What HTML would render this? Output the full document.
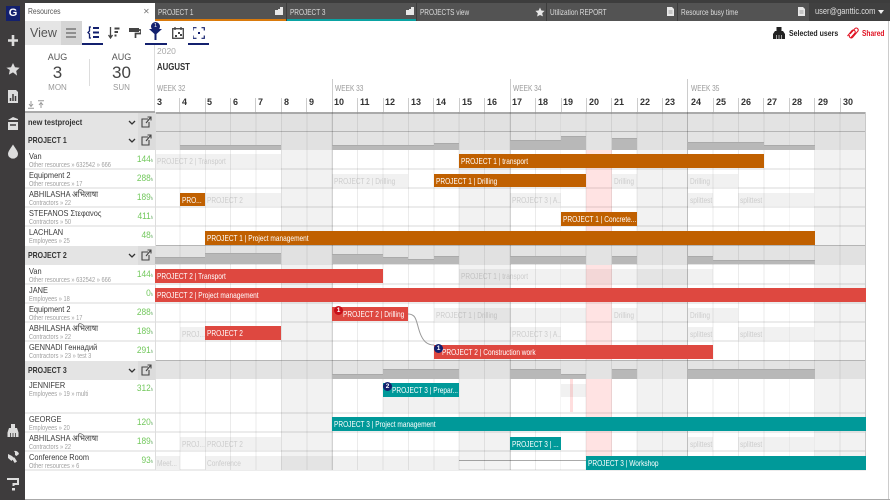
<!DOCTYPE html>
<html><head><meta charset="utf-8"><title>Resources</title>
<style>
html,body{margin:0;padding:0}
body{width:890px;height:500px;overflow:hidden;background:#fff;position:relative;font-family:"Liberation Sans","Noto Sans CJK SC",sans-serif;color:#333}
div,span,svg{position:absolute;box-sizing:border-box}
.t{white-space:nowrap;line-height:1}
.tab{top:3px;height:18px;background:#535353;color:#ddd;font-size:8.5px;line-height:18px;white-space:nowrap}
.tab span{left:3px;top:0;transform:scaleX(.76);transform-origin:0 0}
.n{left:29px;font-size:8.5px;color:#3a3a3a;white-space:nowrap;line-height:10px;transform:scaleX(.87);transform-origin:0 0}
.s{left:29px;font-size:7.3px;color:#a0a0a0;white-space:nowrap;line-height:9px;transform:scaleX(.78);transform-origin:0 0}
.h{left:120px;width:33px;text-align:right;font-size:9.5px;color:#72c85c;white-space:nowrap;line-height:10px;transform:scaleX(.88);transform-origin:100% 0}
.h i{font-style:normal;font-size:4.5px;color:#6a6}
.grp{left:25px;width:130px;height:19px;background:#e4e4e4;font-weight:bold;font-size:8.5px;color:#333;line-height:18px}
.grp span{left:3px;top:0;transform:scaleX(.82);transform-origin:0 0;white-space:nowrap}
.ic{left:113px;top:0;width:17px;height:19px;background:#dcdcdc}
.rl{left:25px;width:841px;height:1.5px;background:#ececec}
.gr{left:155px;width:711px;background:#e3e3e3;border-top:1px solid #b5b5b5}
.we{width:50.8px;top:112px;height:358px;background:rgba(0,0,0,.05)}
.wg{width:50.8px;background:rgba(0,0,0,.008)}
.l{background:#b8b8b8;border-top:1px solid #aaa}
.g{background:#f1f1f1;color:#ccc;font-size:8.5px;line-height:14px;white-space:nowrap;overflow:hidden}
.b{color:#fff;font-size:8.5px;line-height:14px;white-space:nowrap;overflow:hidden}
.b span,.g span{left:2px;top:0;transform:scaleX(.77);transform-origin:0 0}
.o{background:#c06000}.r{background:#de4840}.c{background:#009999}
.d{top:97px;font-size:9px;font-weight:bold;color:#333;line-height:10px}
.w{top:84px;font-size:8px;color:#999;line-height:9px;white-space:nowrap;transform:scaleX(.82);transform-origin:0 0}
.v{top:98px;width:1px;height:14px;background:#ccc}
.vw{top:79px;width:1px;height:33px;background:#ccc}
.bd{width:9px;height:9px;border-radius:50%;color:#fff;font-size:6.5px;line-height:9px;text-align:center;font-weight:bold}
</style></head><body>

<!-- sidebar & top -->
<div style="left:0;top:0;width:890px;height:21px;background:#3d3d3d"></div>
<div style="left:0;top:0;width:25px;height:500px;background:#3e3c3d"></div>
<div style="left:6px;top:6px;width:14px;height:15px;background:#13206e;color:#fff;font-weight:bold;font-size:11px;line-height:15px;text-align:center">G</div>
<svg style="left:7px;top:34px" width="12" height="13"><path d="M6 1V12M1 6.500H11" stroke="#ddd" stroke-width="2.600"/></svg>
<svg style="left:6px;top:62px" width="14" height="14"><path d="M7 1l2 4.200 4.600.6-3.400 3.200.9 4.600L7 10.400 2.900 12.600l.9-4.600L.4 5.800 5 5.200z" fill="#ddd"/></svg>
<svg style="left:7px;top:90px" width="12" height="13"><path d="M1 0h8l2 2v11H1z" fill="#ddd"/><path d="M3.500 11V8M6 11V4M8.500 11V6" stroke="#3e3c3d" stroke-width="1.500"/></svg>
<svg style="left:7px;top:117px" width="12" height="14"><path d="M6 0l5 2v1H1V3zM1 5h10v8H1z" fill="#ddd"/><path d="M3 8h6" stroke="#3e3c3d" stroke-width="1.500"/></svg>
<svg style="left:7px;top:144px" width="12" height="15"><path d="M6 .5C8 4 11 7 11 10a5 4.600 0 0 1-10 0C1 7 4 4 6 .5z" fill="#ddd"/></svg>
<svg style="left:7px;top:424px" width="12" height="14"><path d="M4 0h4v4h2l1.500 4.500V13H.5V8.500L2 4h2z" fill="#ddd"/><path d="M3.500 9v4M6 9v4M8.500 9v4" stroke="#3e3c3d" stroke-width=".8"/></svg>
<svg style="left:6px;top:450px" width="14" height="14"><path d="M8 1a4 4 0 0 1 5 3L10.500 6 9 5 9 2.500zM8.500 7.500l2.500 4-2.300 1.500-3-4.600 1-1z" fill="#ddd"/><path d="M2 4l4 2 2 2-2.500 3L2 8z" fill="#ddd"/></svg>
<svg style="left:7px;top:478px" width="12" height="13"><path d="M1 2V1h10v5H6.500v2" fill="none" stroke="#ddd" stroke-width="2"/><rect x="5" y="10" width="3" height="2.500" fill="#ddd"/></svg>

<!-- tabs -->
<div style="left:25px;top:3px;width:130px;height:18px;background:#fff"></div>
<div class="t" style="left:28px;top:8px;font-size:8px;color:#555;transform:scaleX(.85);transform-origin:0 0">Resources</div>
<div class="t" style="left:143px;top:8px;font-size:8px;color:#777">✕</div>
<div class="tab" style="left:155px;width:131px"><span>PROJECT 1</span><div style="left:0;top:16px;width:131px;height:2px;background:#d97a0c"></div></div>
<div class="tab" style="left:287px;width:129px;"><span>PROJECT 3</span><div style="left:0;top:16px;width:129px;height:2px;background:#0aa3a3"></div></div>
<div class="tab" style="left:417px;width:129px"><span>PROJECTS view</span></div>
<div class="tab" style="left:547px;width:130px"><span>Utilization REPORT</span></div>
<div class="tab" style="left:678px;width:131px"><span>Resource busy time</span></div>
<div style="left:809px;top:3px;width:81px;height:18px;background:#404040"></div>
<div class="t" style="left:815px;top:7px;font-size:9px;color:#ddd;transform:scaleX(.83);transform-origin:0 0">user@ganttic.com</div>
<div style="left:878px;top:10px;width:0;height:0;border:3.500px solid transparent;border-top:4.500px solid #eee;border-bottom:0"></div>
<svg style="left:275px;top:7px" width="9" height="8"><path d="M0 3h3V2h2V0h3v8H0z" fill="#e8e8e8"/></svg>
<svg style="left:406px;top:7px" width="9" height="8"><path d="M0 3h3V2h2V0h3v8H0z" fill="#e8e8e8"/></svg>
<svg style="left:535px;top:7px" width="10" height="10"><path d="M5 .5l1.400 3 3.200.4-2.400 2.200.7 3.300L5 8 2.100 9.500l.7-3.300L.4 3.900l3.200-.4z" fill="#e8e8e8"/></svg>
<svg style="left:667px;top:7px" width="7" height="9"><path d="M0 0h5l2 2v7H0z" fill="#e8e8e8"/><path d="M1.500 4h4M1.500 6h4" stroke="#888" stroke-width=".7"/></svg>
<svg style="left:798px;top:7px" width="7" height="9"><path d="M0 0h5l2 2v7H0z" fill="#e8e8e8"/><path d="M1.500 4h4M1.500 6h4" stroke="#888" stroke-width=".7"/></svg>

<!-- toolbar -->
<div style="left:25px;top:21px;width:36px;height:24px;background:#e5e5e5"></div>
<div style="left:61px;top:21px;width:21px;height:24px;background:#d5d5d5"></div>
<div class="t" style="left:30px;top:27px;font-size:12.500px;color:#555">View</div>
<svg style="left:66px;top:28px" width="11" height="10"><path d="M0 1h10M0 5h10M0 9h10" stroke="#666" stroke-width="1.200"/></svg>
<svg style="left:87px;top:26px" width="13" height="13"><path d="M4 1H2.500v4L1 6.500 2.500 8v4H4" fill="none" stroke="#13206e" stroke-width="1.300"/><path d="M6 2h6M6 6.500h6M6 11h6" stroke="#13206e" stroke-width="2"/></svg>
<div style="left:82px;top:43px;width:21px;height:1.500px;background:#13206e"></div>
<svg style="left:108px;top:27px" width="12" height="12"><path d="M2.500 0v11M0.500 8l2 3 2-3" fill="none" stroke="#444" stroke-width="1.300"/><path d="M6.500 1.500h5M6.500 5h3.500M6.500 8.500h2" stroke="#444" stroke-width="2"/></svg>
<svg style="left:129px;top:27px" width="12" height="12"><path d="M0 1h10v4H0z" fill="#444"/><path d="M10 3h2v3.500H6.500V11" fill="none" stroke="#444" stroke-width="1.700"/></svg>
<svg style="left:149px;top:23px" width="13" height="18"><path d="M0 6h13L7.500 11v6h-2v-6z" fill="#13206e"/></svg>
<div class="bd" style="left:151px;top:22px;background:#13206e;font-size:5.500px;font-weight:normal">1</div>
<div style="left:145px;top:43px;width:22px;height:1.500px;background:#13206e"></div>
<svg style="left:172px;top:27px" width="12" height="12"><rect x=".7" y="1.700" width="10.600" height="9.600" fill="none" stroke="#444" stroke-width="1.300"/><path d="M3 0v3M9 0v3" stroke="#444" stroke-width="1.300"/><path d="M6 5h2v2H6zM3 8h2v2H3zM8 7h2v2H8z" fill="#444"/></svg>
<svg style="left:193px;top:27px" width="12" height="12"><path d="M0 3.500V.7h3.500M8.500.7H11.300v2.800M0 8.500v2.800h3.500M8.500 11.300h2.800V8.500" fill="none" stroke="#13206e" stroke-width="1.200"/><rect x="5" y="5" width="2" height="2" fill="#13206e"/></svg>
<div style="left:188px;top:43px;width:21px;height:1.500px;background:#13206e"></div>

<svg style="left:773px;top:26px" width="12" height="13"><path d="M3.500 1h5v4h1.500l2 3v5H0V8l2-3h1.500z" fill="#222"/><path d="M3.500 9v4M6 9v4M8.500 9v4" stroke="#fff" stroke-width=".6"/></svg>
<div class="t" style="left:789px;top:29px;font-size:8.500px;font-weight:bold;color:#222;transform:scaleX(.82);transform-origin:0 0">Selected users</div>
<svg style="left:845px;top:25px" width="15" height="15"><path d="M5 9l5-5.500a2 2 0 0 1 3 2.500l-5.500 6.500a2 2 0 0 1-3-2.500M2.500 11L7 5.500a2 2 0 0 1 3 2.500L6 12.500" fill="none" stroke="#e01020" stroke-width="1"/></svg>
<div class="t" style="left:862px;top:29px;font-size:8.500px;font-weight:bold;color:#e01020;transform:scaleX(.78);transform-origin:0 0">Shared</div>

<!-- date head -->
<div class="t" style="left:25px;top:53px;width:65px;text-align:center;font-size:9px;color:#555">AUG</div>
<div class="t" style="left:25px;top:64px;width:65px;text-align:center;font-size:17px;color:#444">3</div>
<div class="t" style="left:25px;top:84px;width:65px;text-align:center;font-size:8px;color:#999">MON</div>
<div style="left:89px;top:59px;width:1px;height:27px;background:#ddd"></div>
<div class="t" style="left:90px;top:53px;width:63px;text-align:center;font-size:9px;color:#555">AUG</div>
<div class="t" style="left:90px;top:64px;width:63px;text-align:center;font-size:17px;color:#444">30</div>
<div class="t" style="left:90px;top:84px;width:63px;text-align:center;font-size:8px;color:#999">SUN</div>
<svg style="left:27px;top:100px" width="20" height="9"><path d="M1 .7h6M4 8V2.500M2 5l2-2.500L6 5" fill="none" stroke="#999" stroke-width="1" transform="rotate(180 4 4.500)"/><path d="M11 .7h6M14 8V2.500M12 5l2-2.500L16 5" fill="none" stroke="#999" stroke-width="1"/></svg>
<div style="left:154px;top:45px;width:1px;height:67px;background:#ddd"></div>
<div class="t" style="left:157px;top:47px;font-size:8.500px;color:#aaa">2020</div>
<div class="t" style="left:157px;top:63px;font-size:10px;font-weight:bold;color:#333;transform:scaleX(.78);transform-origin:0 0">AUGUST</div>
<div class="w" style="left:157px">WEEK 32</div>
<div class="w" style="left:335px">WEEK 33</div>
<div class="w" style="left:513px">WEEK 34</div>
<div class="w" style="left:691px">WEEK 35</div>
<div class="vw" style="left:332px"></div><div class="vw" style="left:510px"></div><div class="vw" style="left:687px"></div>
<div class="d" style="left:157px">3</div><div class="d" style="left:182px">4</div><div class="d" style="left:207px">5</div><div class="d" style="left:233px">6</div><div class="d" style="left:258px">7</div><div class="d" style="left:284px">8</div><div class="d" style="left:309px">9</div><div class="d" style="left:334px">10</div><div class="d" style="left:360px">11</div><div class="d" style="left:385px">12</div><div class="d" style="left:411px">13</div><div class="d" style="left:436px">14</div><div class="d" style="left:462px">15</div><div class="d" style="left:487px">16</div><div class="d" style="left:512px">17</div><div class="d" style="left:538px">18</div><div class="d" style="left:563px">19</div><div class="d" style="left:589px">20</div><div class="d" style="left:614px">21</div><div class="d" style="left:640px">22</div><div class="d" style="left:665px">23</div><div class="d" style="left:691px">24</div><div class="d" style="left:716px">25</div><div class="d" style="left:741px">26</div><div class="d" style="left:767px">27</div><div class="d" style="left:792px">28</div><div class="d" style="left:818px">29</div><div class="d" style="left:843px">30</div>
<div class="v" style="left:179px"></div><div class="v" style="left:205px"></div><div class="v" style="left:230px"></div><div class="v" style="left:255px"></div><div class="v" style="left:281px"></div><div class="v" style="left:306px"></div><div class="v" style="left:357px"></div><div class="v" style="left:383px"></div><div class="v" style="left:408px"></div><div class="v" style="left:433px"></div><div class="v" style="left:459px"></div><div class="v" style="left:484px"></div><div class="v" style="left:535px"></div><div class="v" style="left:561px"></div><div class="v" style="left:586px"></div><div class="v" style="left:611px"></div><div class="v" style="left:637px"></div><div class="v" style="left:662px"></div><div class="v" style="left:713px"></div><div class="v" style="left:738px"></div><div class="v" style="left:763px"></div><div class="v" style="left:789px"></div><div class="v" style="left:814px"></div><div class="v" style="left:840px"></div>

<!-- row lines -->
<div class="rl" style="top:168px"></div><div class="rl" style="top:187px"></div><div class="rl" style="top:206px"></div><div class="rl" style="top:225px"></div><div class="rl" style="top:283px"></div><div class="rl" style="top:302px"></div><div class="rl" style="top:321px"></div><div class="rl" style="top:340px"></div><div class="rl" style="top:412px"></div><div class="rl" style="top:431px"></div><div class="rl" style="top:450px"></div><div class="rl" style="top:469px"></div>

<!-- ghost bars -->
<div class="g" style="left:155px;top:154px;width:126px;height:14px"><span>PROJECT 2 | Transport</span></div>
<div class="g" style="left:332px;top:174px;width:76px;height:13px"><span>PROJECT 2 | Drilling</span></div>
<div class="g" style="left:612px;top:174px;width:25px;height:13px"><span>Drilling</span></div>
<div class="g" style="left:688px;top:174px;width:50px;height:13px"><span>Drilling</span></div>
<div class="g" style="left:205px;top:193px;width:76px;height:13px"><span>PROJECT 2</span></div>
<div class="g" style="left:510px;top:193px;width:51px;height:13px"><span>PROJECT 3 | A...</span></div>
<div class="g" style="left:688px;top:193px;width:25px;height:13px"><span>splittest</span></div>
<div class="g" style="left:738px;top:193px;width:76px;height:13px"><span>splittest</span></div>
<div class="g" style="left:459px;top:269px;width:254px;height:14px"><span>PROJECT 1 | transport</span></div>
<div class="g" style="left:434px;top:308px;width:152px;height:13px"><span>PROJECT 1 | Drilling</span></div>
<div class="g" style="left:612px;top:308px;width:25px;height:13px"><span>Drilling</span></div>
<div class="g" style="left:688px;top:308px;width:50px;height:13px"><span>Drilling</span></div>
<div class="g" style="left:180px;top:327px;width:25px;height:13px"><span>PROJ...</span></div>
<div class="g" style="left:510px;top:327px;width:51px;height:13px"><span>PROJECT 3 | A...</span></div>
<div class="g" style="left:688px;top:327px;width:25px;height:13px"><span>splittest</span></div>
<div class="g" style="left:738px;top:327px;width:76px;height:13px"><span>splittest</span></div>
<div class="g" style="left:383px;top:397px;width:76px;height:15px"></div>
<div class="g" style="left:561px;top:384px;width:25px;height:13px"></div>
<div class="g" style="left:180px;top:437px;width:25px;height:13px"><span>PROJ...</span></div>
<div class="g" style="left:205px;top:437px;width:76px;height:13px"><span>PROJECT 2</span></div>
<div class="g" style="left:688px;top:437px;width:25px;height:13px"><span>splittest</span></div>
<div class="g" style="left:738px;top:437px;width:76px;height:13px"><span>splittest</span></div>
<div class="g" style="left:155px;top:456px;width:25px;height:14px"><span>Meet...</span></div>
<div class="g" style="left:205px;top:456px;width:254px;height:14px"><span>Conference</span></div>
<div style="left:459px;top:460px;width:127px;height:1px;background:#aaa"></div>

<!-- weekends, today -->
<div class="we" style="left:281px"></div><div class="we" style="left:459px"></div><div class="we" style="left:637px"></div><div class="we" style="left:815px"></div>
<div style="left:586px;top:150px;width:26px;height:320px;background:rgba(255,90,90,.17)"></div>
<div style="left:570px;top:379px;width:3px;height:33px;background:rgba(255,90,90,.2)"></div>

<!-- group rows -->
<div class="gr" style="top:112px;height:19px;border-top:2px solid #aaa"></div>
<div style="left:25px;top:111px;width:130px;height:2px;background:#aaa"></div>
<div class="gr" style="top:131px;height:19px"></div>
<div class="gr" style="top:245px;height:20px"></div>
<div class="gr" style="top:360px;height:19px"></div>
<div class="wg" style="left:281px;top:113px;height:37px"></div><div class="wg" style="left:459px;top:113px;height:37px"></div><div class="wg" style="left:637px;top:113px;height:37px"></div><div class="wg" style="left:815px;top:113px;height:37px"></div>
<div class="wg" style="left:281px;top:246px;height:19px"></div><div class="wg" style="left:459px;top:246px;height:19px"></div><div class="wg" style="left:637px;top:246px;height:19px"></div><div class="wg" style="left:815px;top:246px;height:19px"></div>
<div class="wg" style="left:281px;top:361px;height:18px"></div><div class="wg" style="left:459px;top:361px;height:18px"></div><div class="wg" style="left:637px;top:361px;height:18px"></div><div class="wg" style="left:815px;top:361px;height:18px"></div>

<!-- grid -->
<div style="left:155px;top:112px;width:711px;height:358px;background:repeating-linear-gradient(90deg,transparent 0,transparent 24.400px,rgba(0,0,0,.08) 24.400px,rgba(0,0,0,.08) 25.390px)"></div>
<div style="left:332px;top:112px;width:1px;height:358px;background:rgba(0,0,0,.14)"></div>
<div style="left:510px;top:112px;width:1px;height:358px;background:rgba(0,0,0,.14)"></div>
<div style="left:687px;top:112px;width:1px;height:358px;background:rgba(0,0,0,.14)"></div>
<div style="left:865px;top:112px;width:1px;height:358px;background:#c8c8c8"></div>
<div style="left:155px;top:112px;width:1px;height:358px;background:#ddd"></div>

<!-- load bars P1 -->
<div class="l" style="left:180px;top:145px;width:101px;height:5px"></div>
<div class="l" style="left:332px;top:145px;width:102px;height:5px"></div>
<div class="l" style="left:434px;top:143px;width:25px;height:7px"></div>
<div class="l" style="left:510px;top:140px;width:51px;height:10px"></div>
<div class="l" style="left:561px;top:136px;width:25px;height:14px"></div>
<div class="l" style="left:612px;top:138px;width:25px;height:12px"></div>
<div class="l" style="left:688px;top:142px;width:76px;height:8px"></div>
<div class="l" style="left:764px;top:145px;width:51px;height:5px"></div>
<!-- P2 -->
<div class="l" style="left:155px;top:257px;width:50px;height:7px"></div>
<div class="l" style="left:205px;top:253px;width:76px;height:11px"></div>
<div class="l" style="left:332px;top:254px;width:51px;height:10px"></div>
<div class="l" style="left:383px;top:257px;width:25px;height:7px"></div>
<div class="l" style="left:408px;top:259px;width:26px;height:5px"></div>
<div class="l" style="left:434px;top:256px;width:25px;height:8px"></div>
<div class="l" style="left:510px;top:256px;width:76px;height:8px"></div>
<div class="l" style="left:612px;top:256px;width:25px;height:8px"></div>
<div class="l" style="left:688px;top:256px;width:25px;height:8px"></div>
<div class="l" style="left:713px;top:260px;width:102px;height:4px"></div>
<!-- P3 -->
<div class="l" style="left:332px;top:374px;width:51px;height:5px"></div>
<div class="l" style="left:383px;top:369px;width:76px;height:10px"></div>
<div class="l" style="left:510px;top:369px;width:51px;height:10px"></div>
<div class="l" style="left:561px;top:374px;width:25px;height:5px"></div>
<div class="l" style="left:612px;top:369px;width:25px;height:10px"></div>
<div class="l" style="left:688px;top:369px;width:127px;height:10px"></div>

<!-- bars -->
<div class="b o" style="left:459px;top:154px;width:305px;height:14px"><span>PROJECT 1 | transport</span></div>
<div class="b o" style="left:434px;top:174px;width:152px;height:13px"><span>PROJECT 1 | Drilling</span></div>
<div class="b o" style="left:180px;top:193px;width:25px;height:13px"><span>PRO...</span></div>
<div class="b o" style="left:561px;top:212px;width:76px;height:14px"><span>PROJECT 1 | Concrete...</span></div>
<div class="b o" style="left:205px;top:231px;width:610px;height:14px"><span>PROJECT 1 | Project management</span></div>
<div class="b r" style="left:155px;top:269px;width:228px;height:14px"><span>PROJECT 2 | Transport</span></div>
<div class="b r" style="left:155px;top:288px;width:711px;height:14px"><span>PROJECT 2 | Project management</span></div>
<div class="b r" style="left:332px;top:307px;width:76px;height:14px"><span style="left:11px">PROJECT 2 | Drilling</span></div>
<div class="b r" style="left:205px;top:326px;width:76px;height:14px"><span>PROJECT 2</span></div>
<div class="b r" style="left:434px;top:345px;width:279px;height:14px"><span style="left:8px">PROJECT 2 | Construction work</span></div>
<div class="b c" style="left:383px;top:383px;width:76px;height:14px"><span style="left:9px">PROJECT 3 | Prepar...</span></div>
<div class="b c" style="left:332px;top:417px;width:534px;height:14px"><span>PROJECT 3 | Project management</span></div>
<div class="b c" style="left:510px;top:437px;width:51px;height:13px"><span>PROJECT 3 | ...</span></div>
<div class="b c" style="left:586px;top:456px;width:280px;height:14px"><span>PROJECT 3 | Workshop</span></div>
<div class="bd" style="left:334px;top:306px;background:#c8101a">1</div>
<div class="bd" style="left:434px;top:344px;background:#13206e">1</div>
<div class="bd" style="left:383px;top:382px;background:#13206e">2</div>
<svg style="left:405px;top:308px" width="36" height="42"><path d="M3 6C12 6 11 14 15 25 18 33 22 37 29 37" fill="none" stroke="#999" stroke-width="1"/></svg>

<!-- group labels -->
<div class="grp" style="top:113px"><span style="transform:scaleX(.87)">new testproject</span><div class="ic"></div><svg style="left:103px;top:7px" width="8" height="5"><path d="M1 1l3 3 3-3" fill="none" stroke="#333" stroke-width="1.300"/></svg><svg style="left:116px;top:3px" width="11" height="12"><path d="M7 3H1v8h7V6M5 7l5-6M6.500 1H10v3.500" fill="none" stroke="#444" stroke-width="1.100"/></svg></div>
<div class="grp" style="top:131px"><span>PROJECT 1</span><div class="ic"></div><svg style="left:103px;top:7px" width="8" height="5"><path d="M1 1l3 3 3-3" fill="none" stroke="#333" stroke-width="1.300"/></svg><svg style="left:116px;top:3px" width="11" height="12"><path d="M7 3H1v8h7V6M5 7l5-6M6.500 1H10v3.500" fill="none" stroke="#444" stroke-width="1.100"/></svg></div>
<div class="grp" style="top:246px"><span>PROJECT 2</span><div class="ic"></div><svg style="left:103px;top:7px" width="8" height="5"><path d="M1 1l3 3 3-3" fill="none" stroke="#333" stroke-width="1.300"/></svg><svg style="left:116px;top:3px" width="11" height="12"><path d="M7 3H1v8h7V6M5 7l5-6M6.500 1H10v3.500" fill="none" stroke="#444" stroke-width="1.100"/></svg></div>
<div class="grp" style="top:361px"><span>PROJECT 3</span><div class="ic"></div><svg style="left:103px;top:7px" width="8" height="5"><path d="M1 1l3 3 3-3" fill="none" stroke="#333" stroke-width="1.300"/></svg><svg style="left:116px;top:3px" width="11" height="12"><path d="M7 3H1v8h7V6M5 7l5-6M6.500 1H10v3.500" fill="none" stroke="#444" stroke-width="1.100"/></svg></div>

<!-- resource labels -->
<div class="n" style="top:151px">Van</div><div class="s" style="top:160px">Other resources » 632542 » 666</div><div class="h" style="top:155px">144<i>h</i></div>
<div class="n" style="top:170px">Equipment 2</div><div class="s" style="top:179px">Other resources » 17</div><div class="h" style="top:174px">288<i>h</i></div>
<div class="n" style="top:189px">ABHILASHA अभिलाषा</div><div class="s" style="top:198px">Contractors » 22</div><div class="h" style="top:193px">189<i>h</i></div>
<div class="n" style="top:208px">STEFANOS Στεφανος</div><div class="s" style="top:217px">Contractors » 50</div><div class="h" style="top:212px">411<i>h</i></div>
<div class="n" style="top:227px">LACHLAN</div><div class="s" style="top:236px">Employees » 25</div><div class="h" style="top:231px">48<i>h</i></div>
<div class="n" style="top:266px">Van</div><div class="s" style="top:275px">Other resources » 632542 » 666</div><div class="h" style="top:270px">144<i>h</i></div>
<div class="n" style="top:285px">JANE</div><div class="s" style="top:294px">Employees » 18</div><div class="h" style="top:289px">0<i>h</i></div>
<div class="n" style="top:304px">Equipment 2</div><div class="s" style="top:313px">Other resources » 17</div><div class="h" style="top:308px">288<i>h</i></div>
<div class="n" style="top:323px">ABHILASHA अभिलाषा</div><div class="s" style="top:332px">Contractors » 22</div><div class="h" style="top:327px">189<i>h</i></div>
<div class="n" style="top:342px">GENNADI Геннадий</div><div class="s" style="top:351px">Contractors » 23 » test 3</div><div class="h" style="top:346px">291<i>h</i></div>
<div class="n" style="top:380px">JENNIFER</div><div class="s" style="top:389px">Employees » 19 » multi</div><div class="h" style="top:384px">312<i>h</i></div>
<div class="n" style="top:414px">GEORGE</div><div class="s" style="top:423px">Employees » 20</div><div class="h" style="top:418px">120<i>h</i></div>
<div class="n" style="top:433px">ABHILASHA अभिलाषा</div><div class="s" style="top:442px">Contractors » 22</div><div class="h" style="top:437px">189<i>h</i></div>
<div class="n" style="top:452px">Conference Room</div><div class="s" style="top:461px">Other resources » 6</div><div class="h" style="top:456px">93<i>h</i></div>

<!-- frame -->
<div style="left:25px;top:499px;width:865px;height:1px;background:#aaa"></div>
<div style="left:888px;top:21px;width:1px;height:478px;background:#ccc"></div>
</body></html>
